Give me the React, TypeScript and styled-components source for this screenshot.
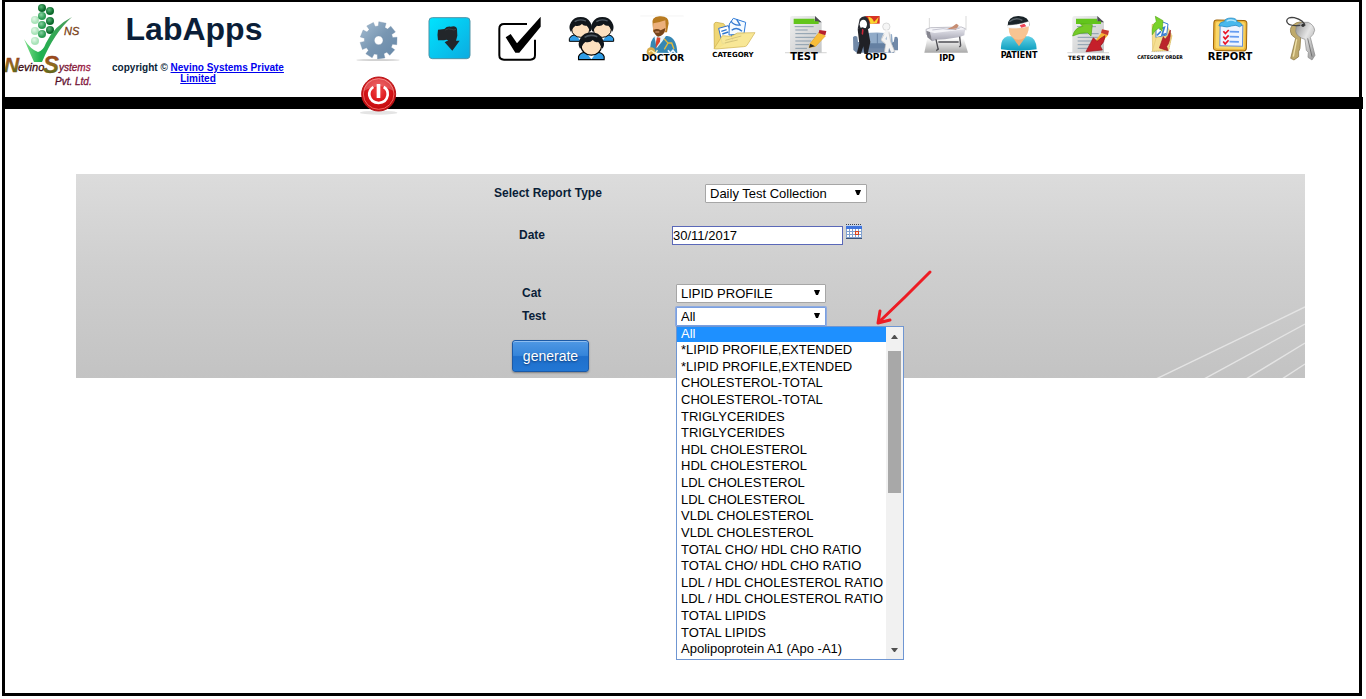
import React from "react";
import styled, { createGlobalStyle, css } from "styled-components";

const navy = "#0a1e38";

const GlobalStyle = createGlobalStyle`
  body {
    margin: 0;
    background: #fff;
    color: ${navy};
    font-family: "Liberation Sans", Arial, sans-serif;
    font-size: 13px;
  }
`;

/* ---------- page shell ---------- */

const Frame = styled.div`
  box-sizing: border-box;
  min-height: calc(100vh - 3px);
  margin: 0 4px 0 2px;
  border: 3px solid #000;
  border-top-width: 2px;
`;

const Header = styled.header`
  display: flex;
  align-items: flex-start;
  height: 95px;
`;

const Logo = styled.svg`
  flex: none;
  width: 90px;
  height: 90px;
`;

const Brand = styled.div`
  flex: none;
  width: 196px;
  margin: 0 47px 0 5px;
  text-align: center;
`;

const BrandTitle = styled.h1`
  margin: 8px 8px 0 0;
  font-size: 32px;
  line-height: 38px;
`;

const Copyright = styled.p`
  margin: 14px 0 0;
  font-size: 10px;
  font-weight: bold;
  line-height: 11px;

  a {
    color: #0000ee;
  }
`;

const Toolbar = styled.nav`
  position: relative;
  z-index: 1;
  display: flex;
  flex: 1;
  flex-wrap: wrap;
  padding-top: 12px;
`;

const Tool = styled.a`
  display: block;
  width: 71px;
  height: 56px;
  color: #000;

  svg {
    display: block;
    width: 71px;
    height: 56px;
    overflow: visible;
  }
`;

const Bar = styled.div`
  height: 12px;
  margin: 0 -4px 0 -3px;
  background: #000;
`;

/* ---------- report form ---------- */

const Panel = styled.main`
  position: relative;
  margin: 65px 54px 0 71px;
  padding: 10px 0 6px;
  background: linear-gradient(#dcdcdc, #cfcfcf 45%, #c3c3c3);
`;

const Stripes = styled.svg`
  position: absolute;
  right: 0;
  bottom: 0;
  width: 150px;
  height: 72px;
`;

const Form = styled.form`
  position: relative;
  width: 397px;
  margin: 0 auto;
`;

const Row = styled.div<{ $inset: number; $label: number; $after: number }>`
  display: grid;
  grid-template-columns: ${(p) => p.$label}px auto;
  justify-content: start;
  padding-left: ${(p) => p.$inset}px;
  margin-bottom: ${(p) => p.$after}px;
`;

const Label = styled.label`
  font-size: 12px;
  font-weight: bold;
  line-height: 18px;
`;

const Field = styled.div`
  position: relative;
  display: flex;
  height: 19px;
`;

const Select = styled.select<{ $wide?: boolean; $open?: boolean }>`
  appearance: none;
  box-sizing: border-box;
  width: ${(p) => (p.$wide ? 162 : 150)}px;
  height: 19px;
  padding: 0 20px 0 4px;
  border: 1px solid #a6a6a6;
  border-radius: 1px;
  background: #fff;
  color: #000;
  font: 13px/17px "Liberation Sans", Arial, sans-serif;
  outline: none;
  ${(p) =>
    p.$open &&
    css`
      border-color: #7a9fe0;
      box-shadow: 0 0 0 1px #8fabdf;
    `}
`;

const SelectArrow = styled.svg`
  position: absolute;
  top: 6px;
  right: 6px;
  width: 6px;
  height: 6px;
  pointer-events: none;
`;

const DateInput = styled.input`
  box-sizing: border-box;
  width: 171px;
  height: 19px;
  padding: 0;
  border: 1px solid #5a68b8;
  background: #fff;
  color: #000;
  font: 13px/17px "Liberation Sans", Arial, sans-serif;
`;

const CalendarButton = styled.button`
  width: 16px;
  height: 16px;
  margin: -2px 0 0 3px;
  padding: 0;
  border: 0;
  background: none;

  svg {
    display: block;
  }
`;

const GenerateButton = styled.button`
  display: block;
  width: 77px;
  height: 32px;
  margin-left: 20px;
  padding: 0;
  border: 1px solid #1c5aa6;
  border-radius: 3px;
  background: linear-gradient(#4f98e4, #3585da 48%, #1f6fcb 52%, #2277d4);
  box-shadow: inset 0 1px 0 #8dbdf0, 0 1px 2px rgba(0, 0, 0, 0.35);
  color: #fff;
  font: 14px/30px "Liberation Sans", Arial, sans-serif;
  text-shadow: 0 1px 2px #0d3c78;
`;

const Popup = styled.div`
  position: absolute;
  z-index: 2;
  top: 19px;
  left: 0;
  display: flex;
  box-sizing: border-box;
  width: 228px;
  height: 334px;
  border: 1px solid #6f96d2;
  background: #fff;
`;

const Options = styled.ul`
  display: grid;
  flex: 1;
  grid-template-rows: 15px repeat(19, 1fr);
  margin: 0;
  padding: 0 0 1px;
  list-style: none;
`;

const Option = styled.li`
  padding-left: 4px;
  background: transparent;
  color: #000;
  line-height: 15px;
  white-space: nowrap;

  &[aria-selected="true"] {
    background: #1e90ff;
    color: #fff;
    line-height: 13px;
  }
`;

const Scrollbar = styled.div`
  display: flex;
  flex-direction: column;
  align-items: center;
  justify-content: space-between;
  width: 17px;
  background: #f1f1f1;

  svg {
    display: block;
    width: 7px;
    height: 4px;
    margin: 8px 0 7px;
  }
`;

const Thumb = styled.div`
  width: 13px;
  height: 142px;
  margin: 5px 0 auto;
  background: #a8a8a8;
`;

const Pointer = styled.svg`
  position: absolute;
  z-index: 3;
  top: -38px;
  left: 196px;
  width: 64px;
  height: 60px;
  pointer-events: none;
`;

/* ---------- icon artwork (drawn on a grid three times finer than the page) ---------- */

const verdana = '"DejaVu Sans", Verdana, sans-serif';
const narrow = '"DejaVu Sans Condensed", "DejaVu Sans", sans-serif';

type ArtProps = {
  dx: number;
  dy?: number;
  caption?: string;
  size?: number;
  x?: number;
  y?: number;
  family?: string;
  children: React.ReactNode;
};

const Art = ({ dx, dy = -14, caption, size, x = 35, y = 45, family = verdana, children }: ArtProps) => (
  <svg viewBox="0 0 71 56" aria-hidden={caption ? undefined : true}>
    <g transform={`translate(${dx} ${dy}) scale(0.33333)`}>{children}</g>
    {caption && (
      <text x={x} y={y} textAnchor="middle" fontSize={size} fontWeight="bold" fontFamily={family} fill="#000">
        {caption}
      </text>
    )}
  </svg>
);

const gearPath = (() => {
  const teeth = 9;
  const points: string[] = [];
  for (let i = 0; i < teeth; i++) {
    const mid = ((i + 0.3) / teeth) * Math.PI * 2 - Math.PI / 2;
    const step = (Math.PI * 2) / teeth;
    [
      [-0.34, 43],
      [-0.29, 56],
      [0.29, 56],
      [0.34, 43],
    ].forEach(([a, r]) => {
      points.push(`${(86 + r * Math.cos(mid + a * step)).toFixed(1)} ${(121 + r * Math.sin(mid + a * step)).toFixed(1)}`);
    });
  }
  return `M${points.join("L")}Z M73 121a13 13 0 1 0 26 0a13 13 0 1 0 -26 0Z`;
})();

const GearArt = () => (
  <Art dx={7}>
    <defs>
      <linearGradient id="gear" x2="1" y2="1">
        <stop offset="0" stopColor="#a5bdd2" />
        <stop offset="0.5" stopColor="#7896b2" />
        <stop offset="1" stopColor="#6688a8" />
      </linearGradient>
    </defs>
    <ellipse cx="84" cy="180" rx="65" ry="3" fill="#d2d2d2" />
    <path d={gearPath} fill="url(#gear)" fillRule="evenodd" stroke="#7590a9" strokeWidth="1" />
  </Art>
);

const ThumbArt = () => (
  <Art dx={-64}>
    <defs>
      <linearGradient id="cyan" x2="1" y2="1">
        <stop offset="0" stopColor="#00e4ff" />
        <stop offset="1" stopColor="#0cabe0" />
      </linearGradient>
    </defs>
    <rect x="237" y="53" width="123" height="123" rx="10" fill="url(#cyan)" stroke="#4c93a6" strokeWidth="3" />
    <path
      d="M264 89L283 87Q291 78 302 80Q318 75 321 87L322 107L318 122H329L307 152L284 127L295 121L289 119L282 121L264 121Q261 104 264 89Z"
      fill="#22262a"
    />
    <path d="M286 90Q296 84 304 88T318 88" stroke="#4a4f53" strokeWidth="2" fill="none" />
  </Art>
);

const CheckArt = () => (
  <Art dx={-135}>
    <path
      d="M531 72H462Q448 72 448 86V166Q448 179 462 179H541Q555 179 555 166V119"
      fill="none"
      stroke="#000"
      strokeWidth="6"
    />
    <path d="M467 112L482 102L501 130L572 50V80L508 158H496Z" fill="#000" />
  </Art>
);

const Person = ({ x, y, scale = 1 }: { x: number; y: number; scale?: number }) => (
  <g transform={`translate(${x} ${y}) scale(${scale})`}>
    <path d="M-34 39V31Q-31 22 -20 20H20Q31 22 34 31V39Z" fill="#2f9ce6" stroke="#000" strokeWidth="3" />
    <path d="M-14 20L0 38L14 20Z" fill="#fff" />
    <ellipse cy="3" rx="27" ry="24" fill="#fde0bf" stroke="#000" strokeWidth="3" />
    <path d="M-30 10Q-38 -2 -29 -18Q-20 -34 0 -34Q20 -34 29 -18Q38 -2 30 10L26 4Q23 -4 18 -8Q8 -6 4 -13Q-4 -5 -16 -8Q-24 -2 -26 6Z" fill="#11161b" />
    <path d="M-18 -20Q-4 -30 16 -22" fill="none" stroke="#4d5761" strokeWidth="4" />
  </g>
);

const GroupArt = () => (
  <Art dx={4}>
    <Person x={62} y={85} />
    <Person x={127} y={85} />
    <Person x={94} y={135} scale={1.13} />
  </Art>
);

const DoctorArt = () => (
  <Art dx={-67} caption="DOCTOR" size={9} x={36} y={47}>
    <path d="M241 48H371" stroke="#eee" strokeWidth="2" />
    <path d="M272 158Q267 119 286 108H322Q350 112 352 159Z" fill="#3687b3" />
    <path d="M283 108L290 145L307 124L318 108Z" fill="#e9f6fb" />
    <path d="M291 112L301 113L300 125L287 145L288 125Z" fill="#d9432d" />
    <path d="M312 116L324 129L313 148M324 129H335L342 147" fill="none" stroke="#e8bc3b" strokeWidth="4" />
    <path d="M278 76Q272 50 298 49Q327 47 326 70L321 97H280Z" fill="#b87b21" />
    <path d="M280 70Q300 67 316 61L318 91Q309 108 294 108Q281 101 279 84Z" fill="#ecb07c" />
    <path d="M280 90Q292 84 302 91L316 84Q315 106 294 110Q282 103 280 90Z" fill="#754419" />
    <path d="M286 96H298" stroke="#e9a581" strokeWidth="3" />
    <circle cx="273" cy="155" r="13" fill="#d9ad4d" />
    <path d="M267 156Q273 148 280 156T292 150" stroke="#fff3b7" strokeWidth="4" fill="none" />
    <path d="M324 151L331 160L339 151L347 161" stroke="#e9f2ff" strokeWidth="5" fill="none" />
  </Art>
);

const CategoryArt = () => (
  <Art dx={-138} caption="CATEGORY" size={7} x={35} y={43}>
    <path d="M462 72Q464 66 470 67L491 71L497 79H548L550 95L476 143L463 145Z" fill="#efd675" stroke="#c6a63c" strokeWidth="2" />
    <path d="M476 85L505 77L518 121L487 131Z" fill="#fff" stroke="#2d6dd0" strokeWidth="3" />
    <path d="M508 72L520 55L557 67L552 101L507 105Z" fill="#f5fbff" stroke="#2d79d8" strokeWidth="3" />
    <path d="M513 63Q521 77 540 75L530 58M515 91Q530 79 546 94M484 94L500 89M487 102L505 96" fill="none" stroke="#3178cf" strokeWidth="4" />
    <path d="M462 146L487 107L514 109L532 99L585 98L561 136Q558 140 551 140L468 147Z" fill="#f8e58e" fillOpacity="0.93" stroke="#cfb04d" strokeWidth="2" />
    <path d="M496 121L544 108M495 129L533 120" stroke="#d6c57b" strokeWidth="3" />
  </Art>
);

const Sheet = () => (
  <>
    <defs>
      <linearGradient id="sheet" x2="1" y2="1">
        <stop offset="0" stopColor="#f0f0f0" />
        <stop offset="1" stopColor="#c4c6c7" />
      </linearGradient>
    </defs>
    <path d="M45 158H170" stroke="#dcdcdc" strokeWidth="4" />
    <path d="M60 54Q60 48 67 48H135L155 67V158H60Z" fill="url(#sheet)" />
    <path d="M135 48L155 67H135Z" fill="#4c4d52" />
    <path d="M71 56H134V64H146V72H71Z" fill="#62c51c" />
    <path d="M74 80H131M76 90H113M76 101H139M76 112H137M76 123H124M76 134H118M76 145H111" stroke="#8b9eae" strokeWidth="3" />
  </>
);

const TestArt = () => (
  <Art dx={1} caption="TEST" size={10} x={35} y={46}>
    <Sheet />
    <path d="M121 130L148 96L166 108L137 139L117 143Z" fill="#f8bd38" stroke="#e3a628" strokeWidth="2" />
    <path d="M148 90L169 93L166 106L146 99Z" fill="#b7212e" />
    <path d="M121 131L135 139L117 143Z" fill="#272727" />
  </Art>
);

const OpdArt = () => (
  <Art dx={-70} caption="OPD" size={9} x={36} y={46}>
    <path d="M286 48H329V71H286Z" fill="#d73325" />
    <path d="M294 50Q307 51 312 66L326 51L321 69L302 72Z" fill="#f9d62d" />
    <path d="M249 112Q254 105 262 110L264 126H371L374 111Q384 107 384 118V151H373V158H260L250 150Z" fill="#7189a8" />
    <path d="M279 102Q325 93 366 103L369 134H278Z" fill="#91abc8" />
    <path d="M289 130H371V145H276V130Z" fill="#6580a2" />
    <path d="M322 101V132" stroke="#6681a4" strokeWidth="3" />
    <path d="M263 86L269 57Q276 48 286 49Q300 58 300 83L290 91Z" fill="#272a30" />
    <ellipse cx="280" cy="73" rx="11" ry="14" fill="#fff" />
    <path d="M263 88L277 82L294 88L301 126L293 162H283L280 139L273 161H260L268 131Z" fill="#202126" />
    <path d="M276 86L281 89L279 105L275 102Z" fill="#cc2738" />
    <circle cx="349" cy="80" r="11" fill="#f5f5f5" stroke="#c8c8c8" strokeWidth="2" />
    <path d="M346 93L356 99V125L369 156M348 98L339 119L353 130L349 157" stroke="#f4f4f4" strokeWidth="12" fill="none" strokeLinejoin="round" />
    <path d="M357 97L362 125L375 157M342 103L333 120L347 132L343 158" stroke="#bababa" strokeWidth="2" fill="none" />
  </Art>
);

const IpdArt = () => (
  <Art dx={-141} caption="IPD" size={9} x={36} y={47} family={narrow}>
    <defs>
      <linearGradient id="floor" x2="0" y2="1">
        <stop offset="0" stopColor="#fff" />
        <stop offset="1" stopColor="#a9a9a9" />
      </linearGradient>
      <linearGradient id="drape" x2="0" y2="1">
        <stop offset="0" stopColor="#e2e2ea" />
        <stop offset="1" stopColor="#a3a3b0" />
      </linearGradient>
    </defs>
    <path d="M472 115H581L594 158H463Z" fill="url(#floor)" />
    <path d="M478 54V90M588 48V91" stroke="#d9d9d9" strokeWidth="3" />
    <path d="M468 88L482 83L574 81L586 86L577 103L487 112L469 103Z" fill="#f4f4f8" stroke="#a5a5b0" strokeWidth="2" />
    <path d="M480 96L487 124L500 119L525 118L566 112L583 106L585 88L494 99Z" fill="url(#drape)" />
    <path d="M469 92L480 96L487 124L472 112Z" fill="#85858f" />
    <path d="M531 87L547 80L559 71L566 76L558 90Z" fill="#c78d72" />
    <path d="M498 118L505 150M569 110L572 137M505 126H566M506 145L499 152M573 136L568 141" stroke="#4f4f54" strokeWidth="4" fill="none" />
    <path d="M487 90L519 86L542 89L569 85" stroke="#c5c5d2" strokeWidth="3" fill="none" />
  </Art>
);

const PatientArt = () => (
  <Art dx={-2} caption="PATIENT" size={8} x={37} y={44}>
    <defs>
      <linearGradient id="shirt" x2="0" y2="1">
        <stop offset="0" stopColor="#62d1e6" />
        <stop offset="1" stopColor="#0c9dbe" />
      </linearGradient>
    </defs>
    <path d="M63 148Q61 115 82 109H146Q170 114 170 148Q116 156 63 148Z" fill="url(#shirt)" />
    <path d="M95 108L117 139L139 108Z" fill="#efad75" />
    <path d="M87 76Q83 105 103 116Q118 123 134 113Q149 96 146 74Z" fill="#f8c492" />
    <path d="M83 78Q83 48 116 48Q148 49 149 77L135 68Q117 81 83 78Z" fill="#192328" />
    <path d="M88 65Q107 50 127 61" fill="none" stroke="#596269" strokeWidth="4" />
    <path d="M83 76Q117 75 148 64V79Q116 88 83 83Z" fill="#fff" stroke="#ddd" strokeWidth="1" />
    <path d="M119 76L133 71L139 79L124 83Z" fill="#ef4456" />
  </Art>
);

const TestOrderArt = () => (
  <Art dx={-73} caption="TEST ORDER" size={6} x={36} y={46}>
    <g transform="translate(217 0)">
      <Sheet />
      <path d="M124 128L150 95L167 106L142 134Z" fill="#f5b235" />
      <path d="M149 88L170 92L167 106L146 98Z" fill="#c93a32" />
      <path d="M61 108Q67 83 91 79L84 71L120 74L116 108L106 98Q83 97 61 108Z" fill="#75ca27" stroke="#4fa810" strokeWidth="2" />
      <path d="M158 107Q146 113 134 124L123 113L101 155L150 150L144 138Q157 127 158 107Z" fill="#c51f2a" stroke="#8f141b" strokeWidth="2" />
    </g>
  </Art>
);

const CategoryOrderArt = () => (
  <Art dx={-144} caption="CATEGORY ORDER" size={5} x={36} y={45} family={narrow}>
    <path d="M513 155H574" stroke="#ddd" strokeWidth="3" />
    <path d="M516 74L531 69L535 81L562 78L576 107L566 151L518 154Z" fill="#f6df8c" stroke="#c9a747" strokeWidth="2" strokeDasharray="4 2" />
    <path d="M528 83L548 66L564 72L560 105L528 113Z" fill="#fff" stroke="#347bd1" strokeWidth="3" />
    <path d="M538 88L553 82L546 105L559 101M531 106L543 94" fill="none" stroke="#3b80d0" strokeWidth="5" />
    <path d="M517 153L529 112L575 108L565 151Z" fill="#f5df93" stroke="#d0b155" strokeWidth="1" />
    <path d="M517 104Q515 72 529 65L526 49L549 62L546 94L538 83Q523 91 517 104Z" fill="#79d22a" stroke="#55aa18" strokeWidth="2" />
    <path d="M571 90Q565 109 555 118L550 110L538 144L564 152L560 139Q572 126 571 90Z" fill="#bc242b" stroke="#941b20" strokeWidth="2" />
  </Art>
);

const ReportArt = () => (
  <Art dx={-5} caption="REPORT" size={10} x={35} y={46}>
    <g transform="rotate(1 121 105)">
      <rect x="71" y="61" width="99" height="91" rx="9" fill="#edb83b" stroke="#9e6308" strokeWidth="3" />
      <rect x="77" y="66" width="87" height="80" rx="6" fill="#f9d76a" />
      <path d="M90 75H158V138H90Z" fill="#eef4ff" stroke="#638ddb" strokeWidth="3" />
      <path d="M86 78Q88 66 102 65Q105 54 123 54Q139 54 141 65Q154 66 155 76L148 80Q137 72 124 78Q111 84 96 79Z" fill="#48b8ed" stroke="#2585bc" strokeWidth="2" />
      <path d="M109 64Q122 56 137 64" fill="none" stroke="#b5e6fa" strokeWidth="4" />
      <path d="M119 95H147M119 110H147M119 125H147" stroke="#669cf0" strokeWidth="5" />
      <path d="M100 94L106 101L116 90M100 110L106 117L116 106M100 125L106 132L116 121" stroke="#e91325" strokeWidth="5" fill="none" />
    </g>
  </Art>
);

const KeysArt = () => (
  <Art dx={-76}>
    <defs>
      <linearGradient id="steel" x2="1" y2="1">
        <stop offset="0" stopColor="#8e8e8e" />
        <stop offset="0.45" stopColor="#e5e5e5" />
        <stop offset="1" stopColor="#939393" />
      </linearGradient>
    </defs>
    <path d="M308 76Q296 86 305 105L317 115L302 175L312 180L326 170V155L330 145L332 112L350 96V76Q330 56 308 76Z" fill="#bea96b" stroke="#7e6b36" strokeWidth="2" />
    <path d="M320 118L310 170" stroke="#efe1aa" strokeWidth="4" />
    <path d="M319 78Q330 65 355 67Q372 75 374 91Q371 105 361 112L375 166L366 180L354 172L355 157L349 151L345 118Q320 111 317 94Z" fill="url(#steel)" stroke="#858585" strokeWidth="2" />
    <path d="M353 115L366 170" stroke="#555" strokeWidth="2" />
    <path d="M331 76Q292 80 290 63Q291 50 313 53Q342 61 345 77" fill="none" stroke="#424242" strokeWidth="4" />
    <circle cx="339" cy="76" r="5" fill="#333" />
  </Art>
);

const PowerArt = () => (
  <Art dx={7} dy={-70}>
    <defs>
      <radialGradient id="power" cx="0.5" cy="0.4">
        <stop offset="0" stopColor="#f04545" />
        <stop offset="0.6" stopColor="#dc171b" />
        <stop offset="1" stopColor="#c50d10" />
      </radialGradient>
    </defs>
    <ellipse cx="86" cy="338" rx="56" ry="6" fill="#d8d8d8" fillOpacity="0.7" />
    <circle cx="86" cy="282" r="51" fill="url(#power)" stroke="#b71619" strokeWidth="3" />
    <circle cx="86" cy="282" r="46" fill="none" stroke="#f0635f" strokeWidth="3" />
    <path d="M41 273Q45 237 86 234Q126 237 131 273Q104 258 86 259T41 273Z" fill="#fff" fillOpacity="0.24" />
    <path d="M70 261Q56 270 58 286Q63 308 86 309Q109 308 113 286Q115 269 101 261" fill="none" stroke="#fff" strokeWidth="8" />
    <path d="M80 252H91V294H80Z" fill="#fff" />
  </Art>
);

const tools = [
  { name: "Settings", Icon: GearArt },
  { name: "Receive", Icon: ThumbArt },
  { name: "Verify", Icon: CheckArt },
  { name: "Users", Icon: GroupArt },
  { name: "Doctor", Icon: DoctorArt },
  { name: "Category", Icon: CategoryArt },
  { name: "Test", Icon: TestArt },
  { name: "OPD", Icon: OpdArt },
  { name: "IPD", Icon: IpdArt },
  { name: "Patient", Icon: PatientArt },
  { name: "Test order", Icon: TestOrderArt },
  { name: "Category order", Icon: CategoryOrderArt },
  { name: "Report", Icon: ReportArt },
  { name: "Passwords", Icon: KeysArt },
  { name: "Log out", Icon: PowerArt },
];

const dots: [number, number, string][] = [
  [37, 6, "deep"],
  [45, 9, "deep"],
  [30, 18, "pale"],
  [37, 14, "mid"],
  [45, 19, "deep"],
  [30, 29, "pale"],
  [37, 23, "mid"],
  [45, 28, "deep"],
  [37, 32, "mid"],
  [30, 39, "pale"],
];

const CompanyLogo = () => (
  <Logo viewBox="0 0 90 90" role="img" aria-label="Nevino Systems Pvt. Ltd.">
    <defs>
      <radialGradient id="deep" cx="0.4" cy="0.35">
        <stop offset="0" stopColor="#58b878" />
        <stop offset="1" stopColor="#0c6a2c" />
      </radialGradient>
      <radialGradient id="mid" cx="0.4" cy="0.35">
        <stop offset="0" stopColor="#8ad3a2" />
        <stop offset="1" stopColor="#2b9c52" />
      </radialGradient>
      <radialGradient id="pale" cx="0.4" cy="0.35">
        <stop offset="0" stopColor="#e3f8e8" />
        <stop offset="1" stopColor="#a9e3b8" />
      </radialGradient>
      <linearGradient id="swoosh" x2="1">
        <stop offset="0" stopColor="#7ee08a" />
        <stop offset="0.35" stopColor="#1fb14e" />
        <stop offset="1" stopColor="#4f9c5e" />
      </linearGradient>
      <linearGradient id="rust" x2="0" y2="1">
        <stop offset="0" stopColor="#a8281c" />
        <stop offset="0.5" stopColor="#8f6d1c" />
        <stop offset="1" stopColor="#3d6b1c" />
      </linearGradient>
      <linearGradient id="wine" x2="1">
        <stop offset="0" stopColor="#3d0a1c" />
        <stop offset="1" stopColor="#c01d50" />
      </linearGradient>
    </defs>
    {dots.map(([x, y, tone]) => (
      <circle key={`${x}-${y}`} cx={x} cy={y} r="4" fill={`url(#${tone})`} />
    ))}
    <path d="M19 37Q26 48 33 50Q38 49 41 41Q49 24 67 15Q49 31 37 60H29Q24 49 19 37Z" fill="url(#swoosh)" />
    <g fontFamily='"Liberation Sans", Arial, sans-serif' fontStyle="italic" strokeWidth="0.3">
      <text x="59" y="33" fontSize="11" fill="#7a4217" stroke="#7a4217">NS</text>
      <text x="-1" y="70" fontSize="21" fill="url(#rust)" stroke="#8a4a1c" fontWeight="bold">N</text>
      <text x="13" y="69" fontSize="11" fill="#3a0a10" stroke="#3a0a10">evino</text>
      <text x="38" y="71" fontSize="24" fill="url(#rust)" stroke="#8a4a1c" fontWeight="bold">S</text>
      <text x="54" y="69" fontSize="10" fill="url(#wine)" stroke="#8c1539">ystems</text>
      <text x="50" y="83" fontSize="10" fill="url(#wine)" stroke="#5e1030">Pvt. Ltd.</text>
    </g>
  </Logo>
);

const CalendarIcon = () => (
  <svg width="16" height="16" viewBox="0 0 16 16" aria-hidden="true" shapeRendering="crispEdges">
    <path d="M0 0h1v1h-1zM2 0h1v1h-1zM4 0h1v1h-1zM6 0h1v1h-1zM8 0h1v1h-1zM10 0h1v1h-1zM12 0h1v1h-1zM14 0h1v1h-1z" fill="#3a4250" />
    <rect y="1" width="16" height="14" fill="#7fa0cf" />
    <rect y="1" width="16" height="1" fill="#c4d4ee" />
    <rect y="2" width="16" height="3" fill="#3f74dc" />
    <rect y="14" width="16" height="1" fill="#3b5276" />
    <path d="M1 5h2v2h-2zM4 5h2v2h-2zM7 5h2v2h-2zM10 5h2v2h-2zM13 5h2v2h-2zM1 8h2v2h-2zM4 8h2v2h-2zM7 8h2v2h-2zM13 8h2v2h-2zM1 11h2v2h-2zM4 11h2v2h-2zM7 11h2v2h-2zM10 11h2v2h-2zM13 11h2v2h-2z" fill="#fff" />
    <rect x="9" y="7" width="4" height="4" fill="#d8431c" />
    <rect x="10" y="8" width="2" height="2" fill="#ffe2d6" />
  </svg>
);

const DownArrow = () => (
  <SelectArrow viewBox="0 0 6 6" aria-hidden="true">
    <path d="M0 0H6L4 5H2Z" fill="#000" />
  </SelectArrow>
);

const testNames = [
  "All",
  "*LIPID PROFILE,EXTENDED",
  "*LIPID PROFILE,EXTENDED",
  "CHOLESTEROL-TOTAL",
  "CHOLESTEROL-TOTAL",
  "TRIGLYCERIDES",
  "TRIGLYCERIDES",
  "HDL CHOLESTEROL",
  "HDL CHOLESTEROL",
  "LDL CHOLESTEROL",
  "LDL CHOLESTEROL",
  "VLDL CHOLESTEROL",
  "VLDL CHOLESTEROL",
  "TOTAL CHO/ HDL CHO RATIO",
  "TOTAL CHO/ HDL CHO RATIO",
  "LDL / HDL CHOLESTEROL RATIO",
  "LDL / HDL CHOLESTEROL RATIO",
  "TOTAL LIPIDS",
  "TOTAL LIPIDS",
  "Apolipoprotein A1 (Apo -A1)",
];

export default function App() {
  return (
    <>
      <GlobalStyle />
      <Frame>
        <Header>
          <CompanyLogo />
          <Brand>
            <BrandTitle>LabApps</BrandTitle>
            <Copyright>
              copyright © <a href="#nevino">Nevino Systems Private Limited</a>
            </Copyright>
          </Brand>
          <Toolbar aria-label="Main">
            {tools.map(({ name, Icon }) => (
              <Tool key={name} href="#tool" aria-label={name}>
                <Icon />
              </Tool>
            ))}
          </Toolbar>
        </Header>
        <Bar />
        <Panel>
          <Stripes viewBox="0 0 150 72" aria-hidden="true">
            <path d="M1 73L150 1M49 73L150 18M91 73L150 37M127 73L150 58" stroke="#e4e4e4" strokeWidth="1.4" fill="none" />
          </Stripes>
          <Form onSubmit={(e) => e.preventDefault()}>
            <Row $inset={2} $label={211} $after={23}>
              <Label htmlFor="report-type">Select Report Type</Label>
              <Field>
                <Select id="report-type" $wide>
                  <option>Daily Test Collection</option>
                </Select>
                <DownArrow />
              </Field>
            </Row>
            <Row $inset={27} $label={153} $after={39}>
              <Label htmlFor="report-date">Date</Label>
              <Field>
                <DateInput id="report-date" type="text" defaultValue="30/11/2017" />
                <CalendarButton type="button" aria-label="Pick a date">
                  <CalendarIcon />
                </CalendarButton>
              </Field>
            </Row>
            <Row $inset={30} $label={154} $after={4}>
              <Label htmlFor="category">Cat</Label>
              <Field>
                <Select id="category">
                  <option>LIPID PROFILE</option>
                </Select>
                <DownArrow />
              </Field>
            </Row>
            <Row $inset={30} $label={154} $after={14}>
              <Label htmlFor="test">Test</Label>
              <Field>
                <Select id="test" $open>
                  <option>All</option>
                </Select>
                <DownArrow />
                <Popup>
                  <Options role="listbox" aria-label="Test">
                    {testNames.map((name, i) => (
                      <Option key={i} role="option" aria-selected={i === 0}>
                        {name}
                      </Option>
                    ))}
                  </Options>
                  <Scrollbar aria-hidden="true">
                    <svg viewBox="0 0 7 4">
                      <path d="M0 4L3 0H4L7 4Z" fill="#505050" />
                    </svg>
                    <Thumb />
                    <svg viewBox="0 0 7 4">
                      <path d="M0 0L3 4H4L7 0Z" fill="#505050" />
                    </svg>
                  </Scrollbar>
                </Popup>
                <Pointer viewBox="0 0 64 60" aria-hidden="true">
                  <path d="M58 3L33 28L6 54M8 42L6 54L18 51" fill="none" stroke="#ed1c24" strokeWidth="3" strokeLinecap="round" strokeLinejoin="round" />
                </Pointer>
              </Field>
            </Row>
            <GenerateButton type="submit">generate</GenerateButton>
          </Form>
        </Panel>
      </Frame>
    </>
  );
}
